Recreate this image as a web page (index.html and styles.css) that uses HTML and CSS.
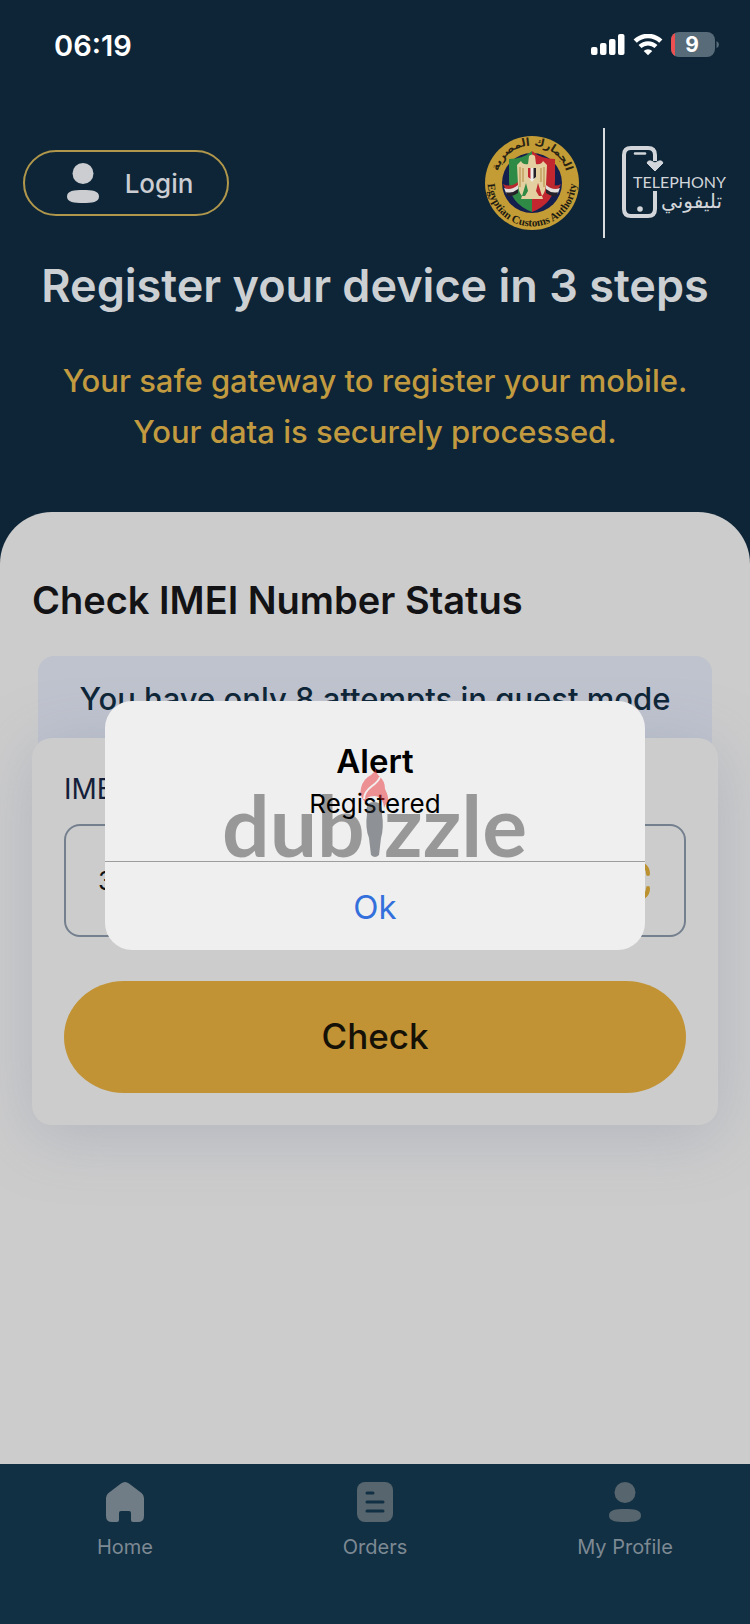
FILE: index.html
```html
<!DOCTYPE html>
<html lang="en">
<head>
<meta charset="utf-8">
<meta name="viewport" content="width=device-width, initial-scale=1">
<title>Telephony</title>
<link rel="stylesheet" href="styles.css">
</head>
<body>
<div class="screen">
  <div class="status">
    <span class="time">06:19</span>
    <div class="status-icons">
      <svg width="34" height="22" viewBox="0 0 34 22" fill="#fff" aria-hidden="true">
        <rect x="0" y="13" width="6.5" height="8" rx="2"/><rect x="9" y="9" width="6.5" height="12" rx="2"/><rect x="18" y="5" width="6.5" height="16" rx="2"/><rect x="27" y="0" width="6.5" height="21" rx="2"/>
      </svg>
      <svg width="30" height="22" viewBox="0 0 30 22" fill="none" stroke="#fff" aria-hidden="true">
        <path d="M2.2 7.2a18.4 18.4 0 0 1 25.6 0" stroke-width="4.6"/>
        <path d="M7 12.6a11.6 11.6 0 0 1 16 0" stroke-width="4.2"/>
        <path d="M15 21.2l-4.3-4.2a6.2 6.2 0 0 1 8.6 0z" fill="#fff" stroke="none"/>
      </svg>
      <svg width="49" height="26" viewBox="0 0 49 26" role="img" aria-label="Battery 9 percent">
        <clipPath id="cell"><rect x="0" y="0" width="44" height="25" rx="8"/></clipPath>
        <g clip-path="url(#cell)"><rect width="44" height="25" fill="#586b78"/><rect width="4" height="25" fill="#ee4f50"/></g>
        <path d="M45.500 9q2.500 1 2.500 3.500t-2.500 3.500z" fill="#586b78"/>
        <text x="21" y="20" class="battery">9</text>
      </svg>
    </div>
  </div>

  <header class="top">
    <div class="brand-row">
      <button class="login" type="button">
        <svg width="32" height="40" viewBox="0 0 32 40" fill="#cbcdd0" aria-hidden="true"><circle cx="16" cy="10.500" r="10.500"/><path d="M16 27c9 0 16 .8 16 6.500S25 40 16 40 0 39.200 0 33.500 7 27 16 27z"/></svg>
        Login
      </button>
      <div class="logos">
        <svg class="seal" width="96" height="96" viewBox="0 0 96 96" role="img" aria-label="Egyptian Customs Authority">
          <defs>
            <path id="arcTop" d="M13 52a35.500 35.500 0 1 1 70 0"/>
            <path id="arcBottom" d="M4 42a44.300 44.300 0 1 0 88 0"/>
            <clipPath id="shield"><path d="M25 24q14 0 23-8 9 8 23 8v22q0 22-23 31-23-9-23-31z"/></clipPath>
          </defs>
          <circle cx="48" cy="48" r="47" fill="#c49c36"/>
          <circle cx="48" cy="48" r="30" fill="#151f4e"/>
          <g clip-path="url(#shield)"><rect x="24" y="15" width="24" height="65" fill="#2e8a45"/><rect x="48" y="15" width="25" height="65" fill="#c2262e"/></g>
          <path d="M19 49q7 4 15-2v4q-8 6-12 4z" fill="#b92a2e"/><path d="M20 53q7 3 14-3v5q-8 6-12 3z" fill="#e4dfdc"/><path d="M22 57q6 2 12-3v4q-7 4-10 3z" fill="#25212a"/>
          <path d="M77 49q-7 4-15-2v4q8 6 12 4z" fill="#b92a2e"/><path d="M76 53q-7 3-14-3v5q8 6 12 3z" fill="#e4dfdc"/><path d="M74 57q-6 2-12-3v4q7 4 10 3z" fill="#25212a"/>
          <path d="M45 21q3-3 6 0l1 8q5 1 7-3l4 4-1 20q-1 8-4 11l-4-13-2 8 3 5h3l1 3H37l1-3h3l3-5-2-8-4 13q-3-3-4-11l-1-20 4-4q2 4 7 3z" fill="#e3cfa0"/>
          <path d="M36 32v20M39 33v14M60 32v20M57 33v14" stroke="#b3873c" stroke-width="1" fill="none"/>
          <path d="M44 33h8v9l-4 5-4-5z" fill="#f0eee8"/><path d="M44 33h2.500v11L44 42z" fill="#c2262e"/><path d="M49.500 33H52v9l-2.500 2z" fill="#25212a"/>
          <text class="seal-ar" direction="rtl"><textPath href="#arcTop" startOffset="50%">الجمارك المصرية</textPath></text>
          <text class="seal-en"><textPath href="#arcBottom" startOffset="50%">Egyptian Customs Authority</textPath></text>
        </svg>
        <span class="divider"></span>
        <svg width="106" height="76" viewBox="0 0 106 76" role="img" aria-label="Telephony">
          <g fill="none" stroke="#d2d5d9" stroke-width="4">
            <path d="M34 16V10q0-7-7-7h-17Q3 3 3 10v54q0 7 7 7h17q7 0 7-7V46"/>
            <path d="M14 8.500h10" stroke-width="2.500" stroke-linecap="round"/>
          </g>
          <path d="M26 18q1-3 4-2l4 2 4-2q3-1 4 2l-8 8z" fill="#d2d5d9" stroke="#d2d5d9" stroke-linejoin="round"/>
          <circle cx="19" cy="64" r="2.800" fill="#d2d5d9"/>
          <text x="12" y="43" class="tel-en">TELEPHONY</text>
          <text x="101" y="63" class="tel-ar" direction="rtl">تليفوني</text>
        </svg>
      </div>
    </div>
    <h1>Register your device in 3 steps</h1>
    <p class="tagline">Your safe gateway to register your mobile.<br>Your data is securely processed.</p>
  </header>

  <main class="sheet">
    <h2>Check IMEI Number Status</h2>
    <p class="banner">You have only 8 attempts in guest mode</p>
    <form class="card">
      <label for="imei">IMEI</label>
      <div class="field">
        <input id="imei" type="text" inputmode="numeric" value="3">
        <button class="scan" type="button" aria-label="Scan">
          <svg width="40" height="40" viewBox="0 0 40 40" fill="none" stroke="#bb922f" stroke-width="4" stroke-linecap="round" aria-hidden="true"><path d="M2 13V9q0-7 7-7h3M28 2q10 2 10 11M38 27q0 9-10 11M12 38H9q-7 0-7-7v-4"/></svg>
        </button>
      </div>
      <button class="check" type="button">Check</button>
    </form>
  </main>

  <nav class="tabs">
    <a href="#home">
      <svg width="40" height="40" viewBox="0 0 40 40" fill="#707d87" aria-hidden="true"><path d="M16 1.500q4-3 8 0l12.500 9.500q2.500 2 2.500 5v18q0 6-6 6h-5q-2 0-2-2v-7q0-2-2-2h-8q-2 0-2 2v7q0 2-2 2H7q-6 0-6-6V16q0-3 2.500-5z"/></svg>
      Home
    </a>
    <a href="#orders">
      <svg width="40" height="40" viewBox="0 0 40 40" aria-hidden="true"><rect x="2" width="36" height="40" rx="8" fill="#56656e"/><path d="M12 11h6M12 20h16M12 29h16" stroke="#123043" stroke-width="3" stroke-linecap="round"/></svg>
      Orders
    </a>
    <a href="#profile">
      <svg width="40" height="40" viewBox="0 0 40 40" fill="#56656e" aria-hidden="true"><circle cx="20" cy="10.500" r="10.500"/><path d="M20 27c9 0 16 .8 16 6.500S29 40 20 40 4 39.200 4 33.500 11 27 20 27z"/></svg>
      My Profile
    </a>
  </nav>

  <div class="overlay">
    <div class="alert" role="alertdialog" aria-labelledby="alert-title" aria-describedby="alert-text">
      <div class="alert-body">
        <h3 id="alert-title">Alert</h3>
        <p id="alert-text">Registered</p>
      </div>
      <button class="ok" type="button">Ok</button>
    </div>
  </div>

  <div class="watermark">
    <svg width="302" height="96" viewBox="0 0 302 96" role="img" aria-label="dubizzle">
      <g opacity=".36">
        <text x="-2" y="93" class="mark">dub</text>
        <text x="303" y="93" class="mark mark-end">zzle</text>
      </g>
      <path d="M143 50q-2-12 7-12t8 12q2 14-1 24l-2 17q-4 4-8 0l-2-17q-4-10-2-24z" fill="#2d333a" opacity=".5"/>
      <path d="M152 4q0 6 4 9 5 4 5 12 4 8 3 12-3 4-4 7-1-12-10-12-8 0-9 6-6-6-4-14 2-9 10-13 4-3 5-7z" fill="#ec3237" opacity=".5"/>
      <path d="M156 13q-2 5-8 9-8 6-8 13" fill="none" stroke="#f3eeee" stroke-width="2"/>
    </svg>
  </div>
</div>
</body>
</html>
```
FILE: styles.css
```css
* { box-sizing: border-box; }
body { margin: 0; font-family: Inter, "Liberation Sans", sans-serif; background: #0d2537; }
h1, h2, h3, p { margin: 0; }
button { font: inherit; border: 0; background: none; padding: 0; }

.screen { position: relative; min-height: 100vh; display: flex; flex-direction: column; }

.status { display: flex; justify-content: space-between; align-items: center; height: 90px; padding: 0 30px 0 54px; }
.time { font-size: 29px; font-weight: 600; color: #fff; }
.status-icons { display: flex; align-items: center; gap: 8px; }
.battery { font-size: 21px; font-weight: 700; fill: #fff; text-anchor: middle; }

.top { padding: 38px 23px 55px; text-align: center; }
.brand-row { display: flex; justify-content: space-between; align-items: center; }
.login { display: flex; align-items: center; justify-content: center; gap: 26px; width: 206px; height: 66px; padding-left: 8px; border: 2px solid #b0974b; border-radius: 33px; color: #cbcdd3; font-size: 26px; font-weight: 500; }
.logos { display: flex; align-items: center; gap: 16px; }
.seal { margin-right: 7px; }
.divider { width: 2px; height: 110px; background: #d9dcdf; }
.seal-ar { font: 700 11px "DejaVu Sans", sans-serif; fill: #2a2414; text-anchor: middle; }
.seal-en { font: 700 11px "Liberation Serif", serif; fill: #1d1a12; text-anchor: middle; }
.tel-en { font: 400 16px Lato, sans-serif; fill: #d2d5d9; }
.tel-ar { font: 400 20px "DejaVu Sans", sans-serif; fill: #d2d5d9; }

h1 { margin-top: 20px; font-size: 45px; line-height: 56px; font-weight: 600; color: #cdd0d3; }
.tagline { margin-top: 41px; font-size: 31px; line-height: 51px; font-weight: 500; color: #c29a3f; }

.sheet { flex: 1; padding: 64px 32px; background: #cccccc; border-radius: 52px 52px 0 0; }
h2 { font-size: 38px; line-height: 48px; font-weight: 600; color: #131316; }
.banner { margin: 32px 6px -20px; padding: 23px 16px 39px; border-radius: 16px 16px 0 0; background: #bfc3ce; color: #0d2537; font-size: 31px; line-height: 40px; font-weight: 500; text-align: center; }
.card { position: relative; display: flex; flex-direction: column; padding: 35px 32px 32px; border-radius: 20px; background: #cccccc; box-shadow: 0 10px 64px rgba(130, 140, 165, .36); }
.card label { font-size: 28px; line-height: 32px; color: #14203a; }
.field { display: flex; align-items: center; height: 113px; margin-top: 19px; padding: 0 34px 0 32px; border: 2px solid #75808f; border-radius: 16px; }
.field input { flex: 1; min-width: 0; padding: 0; border: 0; outline: 0; background: none; font: inherit; font-size: 26px; color: #111; }
.scan { display: flex; }
.check { height: 112px; margin-top: 44px; padding-bottom: 2px; border-radius: 60px / 56px; background: #c19334; color: #151107; font-size: 35px; font-weight: 500; }

.tabs { display: grid; grid-template-columns: repeat(3, 1fr); height: 160px; padding-top: 18px; background: #123043; }
.tabs a { display: flex; flex-direction: column; align-items: center; gap: 11px; color: #7d8993; font-size: 20px; line-height: 28px; text-decoration: none; }

.overlay { position: absolute; inset: 27px 0 0; display: grid; place-items: center; }
.alert { width: 72%; border-radius: 27px; overflow: hidden; background: #efeff0; text-align: center; color: #000; }
.alert-body { padding: 39px 20px 35px; border-bottom: 1px solid #9d9d9d; }
.alert h3 { font-size: 33px; line-height: 42px; font-weight: 600; }
.alert p { font-size: 26px; line-height: 44px; }
.ok { display: block; width: 100%; height: 88px; padding-top: 2px; color: #3470dc; font-size: 33px; }

.watermark { position: absolute; inset: 0; display: grid; place-items: center; pointer-events: none; }
.watermark svg { overflow: visible; }
.mark { font: 700 84px Lato, sans-serif; fill: #000; }
.mark-end { text-anchor: end; }
```
